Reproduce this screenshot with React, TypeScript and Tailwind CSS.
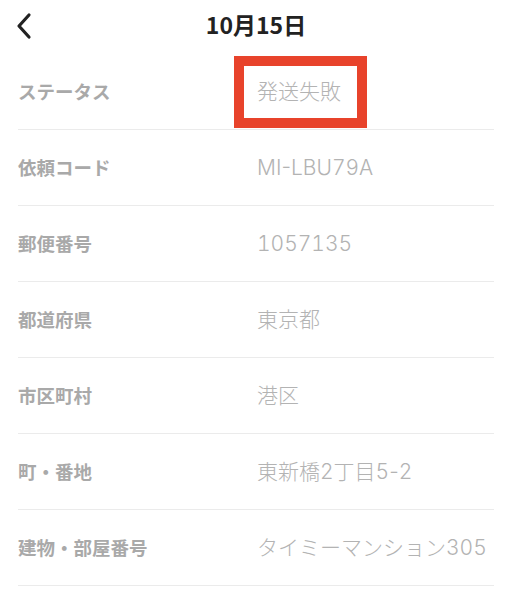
import React from 'react';

interface DetailRow {
  label: string;
  value: string;
  highlight?: boolean;
}

const rows: DetailRow[] = [
  { label: 'ステータス', value: '発送失敗', highlight: true },
  { label: '依頼コード', value: 'MI-LBU79A' },
  { label: '郵便番号', value: '1057135' },
  { label: '都道府県', value: '東京都' },
  { label: '市区町村', value: '港区' },
  { label: '町・番地', value: '東新橋2丁目5-2' },
  { label: '建物・部屋番号', value: 'タイミーマンション305' },
];

const font = { fontFamily: '"Noto Sans CJK JP", "Noto Sans", sans-serif' };
const valueFont = { fontFamily: 'Inter, "Noto Sans CJK JP", sans-serif' };

// digits get the wider tabular figures, the rest keeps normal spacing
const renderValue = (value: string) =>
  value.split(/(\d+)/).map((part, i) =>
    /^\d+$/.test(part) ? (
      <span key={i} className="tabular-nums">{part}</span>
    ) : (
      <span key={i}>{part}</span>
    )
  );

const App: React.FC = () => {
  return (
    <div className="w-[512px] h-[600px] bg-white overflow-hidden" style={font}>
      {/* Header */}
      <div className="relative flex items-center justify-center h-[54px]">
        <button className="absolute left-[12px] top-[10px] p-[2px]">
          <svg width="20" height="28" viewBox="0 0 20 28" fill="none">
            <path d="M15 3 L5 14 L15 25" stroke="#222222" strokeWidth="3.2" strokeLinecap="round" strokeLinejoin="round" />
          </svg>
        </button>
        <h1 className="text-[23px] font-bold text-[#222222] -mt-[5px]">10月15日</h1>
      </div>
      {/* Rows */}
      <div className="mx-[18px]">
        {rows.map((row) => (
          <div key={row.label} className="flex items-center h-[76px] border-b border-[#ebebeb]">
            <div className="w-[239px] text-[18.5px] font-bold text-[#a9a9a9]">{row.label}</div>
            <div className="relative text-[21px] font-light text-[#b3b3b3] whitespace-nowrap" style={valueFont}>
              {row.highlight && (
                <div className="absolute -left-[23px] -top-[20px] w-[133px] h-[72px] border-[10px] border-[#e8432b]" />
              )}
              <span className="relative">{renderValue(row.value)}</span>
            </div>
          </div>
        ))}
      </div>
    </div>
  );
};

export default App;
